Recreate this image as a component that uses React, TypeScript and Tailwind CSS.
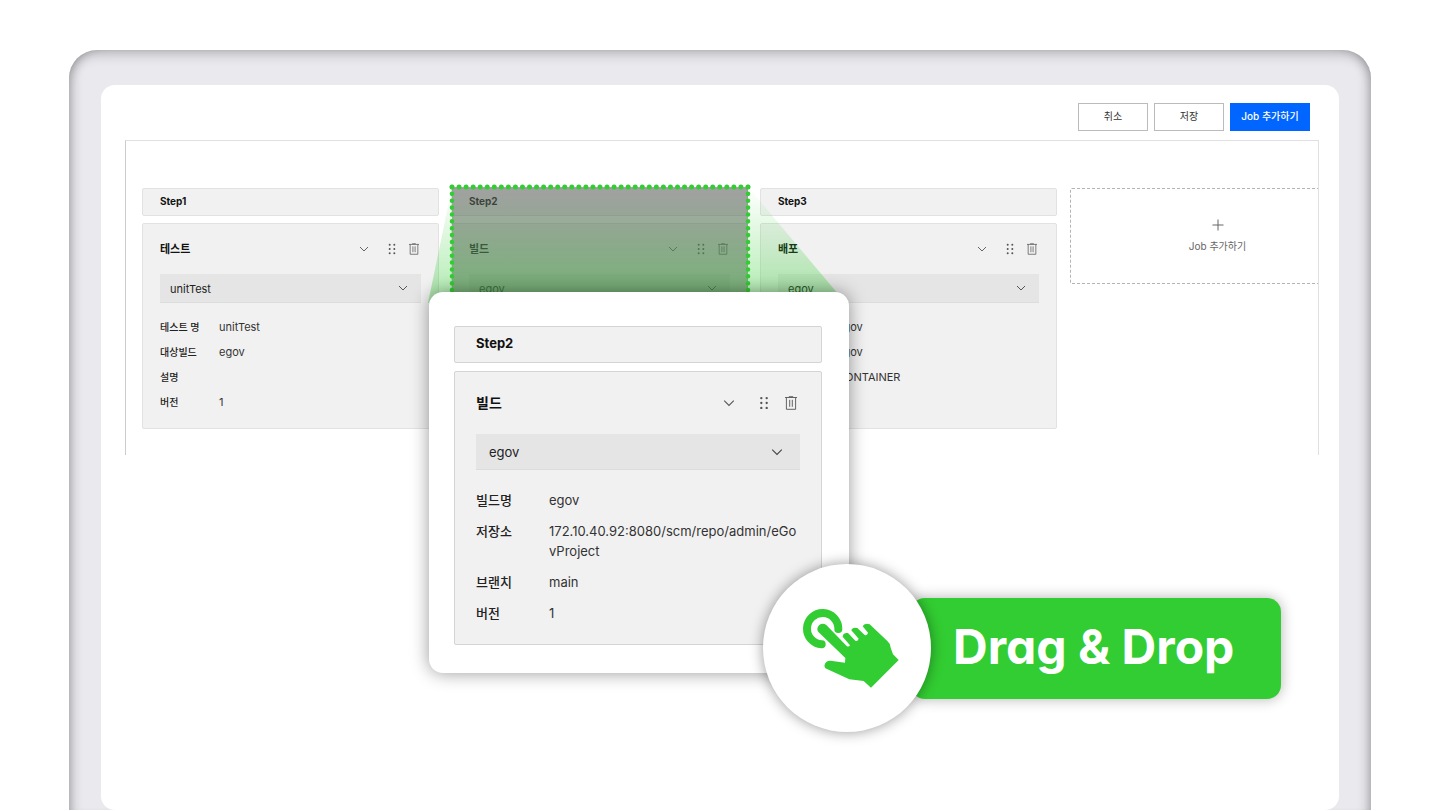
import React, { useState } from 'react';
import { clsx } from 'clsx';

interface JobField {
  label: string;
  value: string;
}

interface Job {
  step: string;
  title: string;
  target: string;
  fields: JobField[];
}

const TEST_JOB: Job = {
  step: 'Step1',
  title: '테스트',
  target: 'unitTest',
  fields: [
    { label: '테스트 명', value: 'unitTest' },
    { label: '대상빌드', value: 'egov' },
    { label: '설명', value: '' },
    { label: '버전', value: '1' },
  ],
};

const BUILD_JOB: Job = {
  step: 'Step2',
  title: '빌드',
  target: 'egov',
  fields: [
    { label: '빌드명', value: 'egov' },
    { label: '저장소', value: '172.10.40.92:8080/scm/repo/admin/eGovProject' },
    { label: '브랜치', value: 'main' },
    { label: '버전', value: '1' },
  ],
};

const DEPLOY_JOB: Job = {
  step: 'Step3',
  title: '배포',
  target: 'egov',
  fields: [
    { label: '배포명', value: 'egov' },
    { label: '대상빌드', value: 'egov' },
    { label: '유형', value: 'CONTAINER' },
    { label: '버전', value: '1' },
  ],
};

const ChevronIcon: React.FC<{ className: string }> = ({ className }) => (
  <svg viewBox="0 0 10 10" className={className} fill="none" stroke="currentColor" strokeWidth="0.9" aria-hidden="true">
    <path d="M1 3l4 4 4-4" />
  </svg>
);

const GripIcon: React.FC<{ className: string }> = ({ className }) => (
  <svg viewBox="0 0 12 12" className={className} fill="currentColor" aria-hidden="true">
    {[1.8, 6, 10.2].map((y) => (
      <React.Fragment key={y}>
        <circle cx="3.7" cy={y} r="1" />
        <circle cx="8.3" cy={y} r="1" />
      </React.Fragment>
    ))}
  </svg>
);

const TrashIcon: React.FC<{ className: string }> = ({ className }) => (
  <svg viewBox="0 0 12 14" className={className} fill="none" stroke="currentColor" strokeWidth="0.9" aria-hidden="true">
    <path d="M0 1.5h12M3.8 0.7h4.4M1.4 1.5v11.8h9.2V1.5M4.7 3.8v7M7.3 3.8v7" />
  </svg>
);

interface JobCardProps {
  job: Job;
  id: string;
  large?: boolean;
  // the source card keeps only its header while its preview is dragged
  dragging?: boolean;
}

const JobCard: React.FC<JobCardProps> = ({ job, id, large = false, dragging = false }) => {
  const [target, setTarget] = useState(job.target);

  return (
    <div className={clsx('flex flex-col', large ? 'gap-2' : 'gap-[7px]')}>
      <h2
        className={clsx(
          'flex items-center rounded-[2px] border bg-[#f1f1f1] font-bold text-[#111]',
          large ? 'h-[37px] border-[#d4d4d4] px-[21px] pb-[2px] text-[13px]' : 'h-7 border-[#e2e2e2] px-[17px] pb-px text-[10px]',
        )}
      >
        {job.step}
      </h2>

      <section
        className={clsx(
          'rounded-[2px] border bg-[#f1f1f1]',
          large ? 'h-[274px] border-[#d4d4d4] px-[21px] pt-5' : 'h-[206px] border-[#e2e2e2] px-[17px] pt-4',
        )}
      >
        <div className={clsx('flex items-center text-[#555]', large ? 'h-[22px] pr-[3px]' : 'h-[18px] pr-[2px]')}>
          <h3 className={clsx('flex-1 font-bold text-[#111]', large ? 'text-sm' : 'text-[11px]')}>{job.title}</h3>
          <button type="button" aria-label="접기" className={large ? 'mr-[22px]' : 'mr-[17px]'}>
            <ChevronIcon className={large ? 'size-3' : 'size-[10px]'} />
          </button>
          <button type="button" aria-label="이동" className={large ? 'mr-[14px]' : 'mr-[11px]'}>
            <GripIcon className={large ? 'size-[14px]' : 'size-3'} />
          </button>
          <button type="button" aria-label="삭제">
            <TrashIcon className={large ? 'h-[14px] w-3' : 'h-3 w-[10px]'} />
          </button>
        </div>

        <div className={clsx('relative', large ? 'mt-5' : 'mt-4')}>
          <select
            aria-label={`${job.title} 대상`}
            value={target}
            onChange={(e) => setTarget(e.target.value)}
            className={clsx(
              'w-full appearance-none border-b border-[#dcdcdc] bg-[#e5e5e5] text-[#222]',
              large ? 'h-9 px-[13px] pt-[2px] text-[13px]' : 'h-[29px] px-[10px] pt-[2px] text-[11px]',
            )}
          >
            <option>{job.target}</option>
          </select>
          <ChevronIcon
            className={clsx(
              'pointer-events-none absolute text-[#444]',
              large ? 'top-3 right-[17px] size-3' : 'top-[9px] right-[13px] size-[10px]',
            )}
          />
        </div>

        {!dragging && (
          <dl
            className={clsx(
              'grid text-[#333]',
              large
                ? 'mt-5 grid-cols-[73px_1fr] gap-y-[11px] text-[13px] leading-5'
                : 'mt-4 grid-cols-[59px_1fr] gap-y-[9px] text-[11px] leading-4',
            )}
          >
            {job.fields.map(({ label, value }) => (
              <React.Fragment key={`${id}-${label}`}>
                <dt className={clsx('font-medium text-[#222]', !large && 'text-[10px]')}>{label}</dt>
                <dd className="break-all">{value}</dd>
              </React.Fragment>
            ))}
          </dl>
        )}
      </section>
    </div>
  );
};

const DropZone: React.FC = () => (
  <svg
    viewBox="0 0 424 120"
    className="pointer-events-none absolute -top-[5px] -left-[23px] h-[120px] w-[424px]"
    fill="none"
    aria-hidden="true"
  >
    <defs>
      <linearGradient id="beam" x1="0" y1="4" x2="0" y2="110" gradientUnits="userSpaceOnUse">
        <stop offset="0" stopColor="#32cd32" stopOpacity="0" />
        <stop offset="1" stopColor="#32cd32" stopOpacity="0.36" />
      </linearGradient>
    </defs>
    <path d="M24 4h296v116H24z" fill="#5e5e5e" fillOpacity="0.55" />
    <path d="M24 4h296l91 108v8H0z" fill="url(#beam)" />
    <path d="M24 4H320" stroke="#32cd32" strokeWidth="5" strokeLinecap="round" strokeDasharray="0 7.047" />
    <path d="M24 4v116M320 4v116" stroke="#32cd32" strokeWidth="4.6" strokeLinecap="round" strokeDasharray="0 6.87" />
  </svg>
);

const TapIcon: React.FC = () => (
  <svg viewBox="155 175 294 243" className="h-[81px] w-[98px]" fill="#32cd32" aria-hidden="true">
    <path d="M214 284A47 47 0 1 1 264 238" fill="none" stroke="#32cd32" strokeWidth="24" strokeLinecap="round" />
    <path d="M205 248C193 234 212 213 228 226L289 289Q295 293 299 287L277 261Q278 248 293 250L315 273Q322 276 325 267L303 242Q306 231 321 235L343 256Q350 259 353 249L337 230Q342 219 358 224L411 274Q420 281 421 294L428 314L445 331L362 414L340 394L297 389L230 358Q219 353 224 342Q229 332 241 333L284 339L285 325Z" />
  </svg>
);

const DragHint: React.FC = () => (
  <div className="absolute top-[376px] left-[312px] flex items-center">
    <div className="z-10 flex size-[168px] items-center justify-center rounded-full bg-white pl-2 shadow-[0_0_14px_rgba(0,0,0,0.4)]">
      <TapIcon />
    </div>
    <p className="-ml-5 flex h-[101px] w-[370px] items-center rounded-[14px] bg-[#32cd32] pb-[2px] pl-[42px] font-['Inter',sans-serif] text-[48px] font-bold whitespace-nowrap text-white shadow-[0_0_14px_rgba(0,0,0,0.3)] [font-feature-settings:'cv11']">
      Drag &amp; Drop
    </p>
  </div>
);

export default function App() {
  return (
    <div className="flex min-h-screen flex-col bg-white pt-[50px] pr-[70px] pb-px pl-[69px] font-['Inter','Noto_Sans_CJK_KR',sans-serif]">
      <div className="flex flex-1 flex-col rounded-t-[28px] bg-[#eae9ee] px-8 pt-[35px] shadow-[inset_12px_0_12px_-10px_rgba(0,0,0,0.3),inset_-12px_0_12px_-10px_rgba(0,0,0,0.3),inset_0_10px_14px_-8px_rgba(0,0,0,0.3)]">
        <main className="flex-1 rounded-[14px] bg-white pt-[18px] pr-5 pl-6">
          <div className="flex justify-end gap-[6px] pr-[9px] text-[10px] text-[#333]">
            <button type="button" className="h-7 w-[70px] border border-[#bbb] bg-white pb-[2px]">
              취소
            </button>
            <button type="button" className="h-7 w-[70px] border border-[#bbb] bg-white pb-[2px]">
              저장
            </button>
            <button type="button" className="h-7 w-[80px] bg-[#0066ff] pb-[2px] font-medium text-white">
              Job 추가하기
            </button>
          </div>

          <div className="mt-[9px] flex h-[315px] gap-3 border-x border-t border-[#e0e0e0] border-l-[#ccc] pt-[47px] pl-4">
            <div className="w-[297px] shrink-0">
              <JobCard id="test" job={TEST_JOB} />
            </div>

            <div className="relative z-10 w-[297px] shrink-0">
              <JobCard id="build" job={BUILD_JOB} dragging />
              <DropZone />
              <div className="absolute top-[104px] -left-[22px] w-[420px] rounded-[14px] bg-white pt-[34px] pr-[27px] pb-7 pl-[25px] shadow-[0_0_18px_rgba(0,0,0,0.4)]">
                <JobCard id="build-drag" job={BUILD_JOB} large />
              </div>
              <DragHint />
            </div>

            <div className="w-[297px] shrink-0">
              <JobCard id="deploy" job={DEPLOY_JOB} />
            </div>

            <button
              type="button"
              className="ml-px flex h-24 flex-1 flex-col items-center justify-center gap-2 rounded-l-[2px] border border-r-0 border-dashed border-[#b4b4b4] pl-[46px] text-[10px] text-[#666]"
            >
              <svg viewBox="0 0 12 12" className="size-3" fill="none" stroke="currentColor" aria-hidden="true">
                <path d="M6 0.5v11M0.5 6h11" />
              </svg>
              Job 추가하기
            </button>
          </div>
        </main>
      </div>
    </div>
  );
}
